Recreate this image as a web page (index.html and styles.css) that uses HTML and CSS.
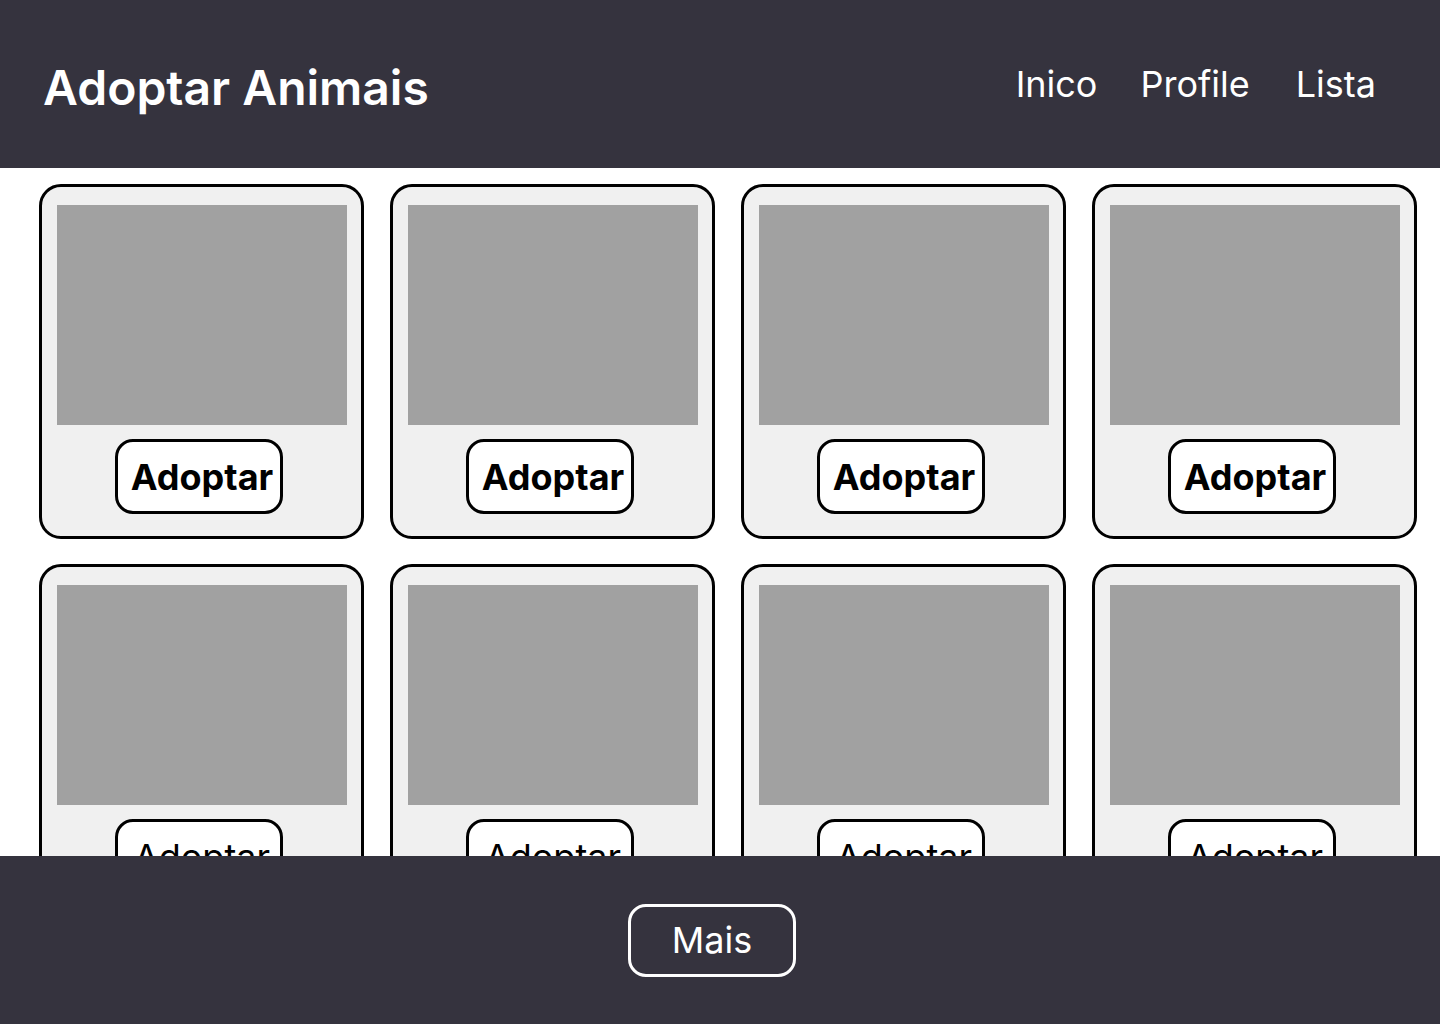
FILE: index.html
```html
<!DOCTYPE html>
<html lang="pt">
<head>
<meta charset="utf-8">
<title>Adoptar Animais</title>
<link rel="stylesheet" href="styles.css">
</head>
<body>
<div class="page">
  <header class="topbar">
    <h1 class="brand">Adoptar Animais</h1>
    <nav class="nav">
      <a href="#" class="nav-link">Inico</a>
      <a href="#" class="nav-link">Profile</a>
      <a href="#" class="nav-link">Lista</a>
    </nav>
  </header>
  <main class="content">
    <div class="grid">
      <div class="card"><div class="photo"></div><button class="adopt bold">Adoptar</button></div>
      <div class="card"><div class="photo"></div><button class="adopt bold">Adoptar</button></div>
      <div class="card"><div class="photo"></div><button class="adopt bold">Adoptar</button></div>
      <div class="card"><div class="photo"></div><button class="adopt bold">Adoptar</button></div>
      <div class="card"><div class="photo"></div><button class="adopt">Adoptar</button></div>
      <div class="card"><div class="photo"></div><button class="adopt">Adoptar</button></div>
      <div class="card"><div class="photo"></div><button class="adopt">Adoptar</button></div>
      <div class="card"><div class="photo"></div><button class="adopt">Adoptar</button></div>
    </div>
  </main>
  <footer class="bottombar">
    <button class="more">Mais</button>
  </footer>
</div>
</body>
</html>
```
FILE: styles.css
```css
* { box-sizing: border-box; }
html, body { margin: 0; padding: 0; }
body {
  font-family: Inter, "Noto Sans", sans-serif;
  background: #ffffff;
}
.page {
  height: 100vh;
  display: flex;
  flex-direction: column;
}
.topbar {
  flex: 0 0 168px;
  background: #35333e;
  display: flex;
  align-items: center;
  justify-content: space-between;
  padding: 0 64px 0 43px;
}
.brand {
  margin: 0;
  color: #ffffff;
  font-size: 48px;
  font-weight: 600;
  line-height: 1;
  padding-top: 8px;
}
.nav {
  display: flex;
  gap: 46px;
}
.nav-link {
  color: #ffffff;
  text-decoration: none;
  font-size: 36px;
  font-weight: 400;
  line-height: 1;
}
.nav-link:first-child { margin-right: -3px; }
.content {
  flex: 1 1 auto;
  overflow: hidden;
  padding: 16px 0 0 39px;
}
.grid {
  display: grid;
  grid-template-columns: repeat(4, 325px);
  column-gap: 26px;
  row-gap: 25px;
}
.card {
  height: 355px;
  background: #f0f0f0;
  border: 3px solid #000000;
  border-radius: 22px;
  padding: 18px 15px 0;
  display: flex;
  flex-direction: column;
  align-items: center;
}
.photo {
  width: 290px;
  height: 220px;
  background: #a1a1a1;
}
.adopt {
  margin: 14px 5px 0 0;
  width: 168px;
  height: 75px;
  background: #ffffff;
  border: 3px solid #000000;
  border-radius: 18px;
  font-family: Inter, "Noto Sans", sans-serif;
  font-size: 36px;
  font-weight: 400;
  color: #000000;
  padding: 0 0 0 6px;
  line-height: 1;
}
.adopt.bold { font-weight: 700; }
.bottombar {
  flex: 0 0 168px;
  background: #35333e;
  display: flex;
  align-items: center;
  justify-content: center;
  padding-right: 16px;
}
.more {
  width: 168px;
  height: 73px;
  background: transparent;
  border: 3px solid #ffffff;
  border-radius: 18px;
  color: #ffffff;
  font-family: Inter, "Noto Sans", sans-serif;
  font-size: 36px;
  font-weight: 400;
  line-height: 1;
  padding: 0;
}
```
